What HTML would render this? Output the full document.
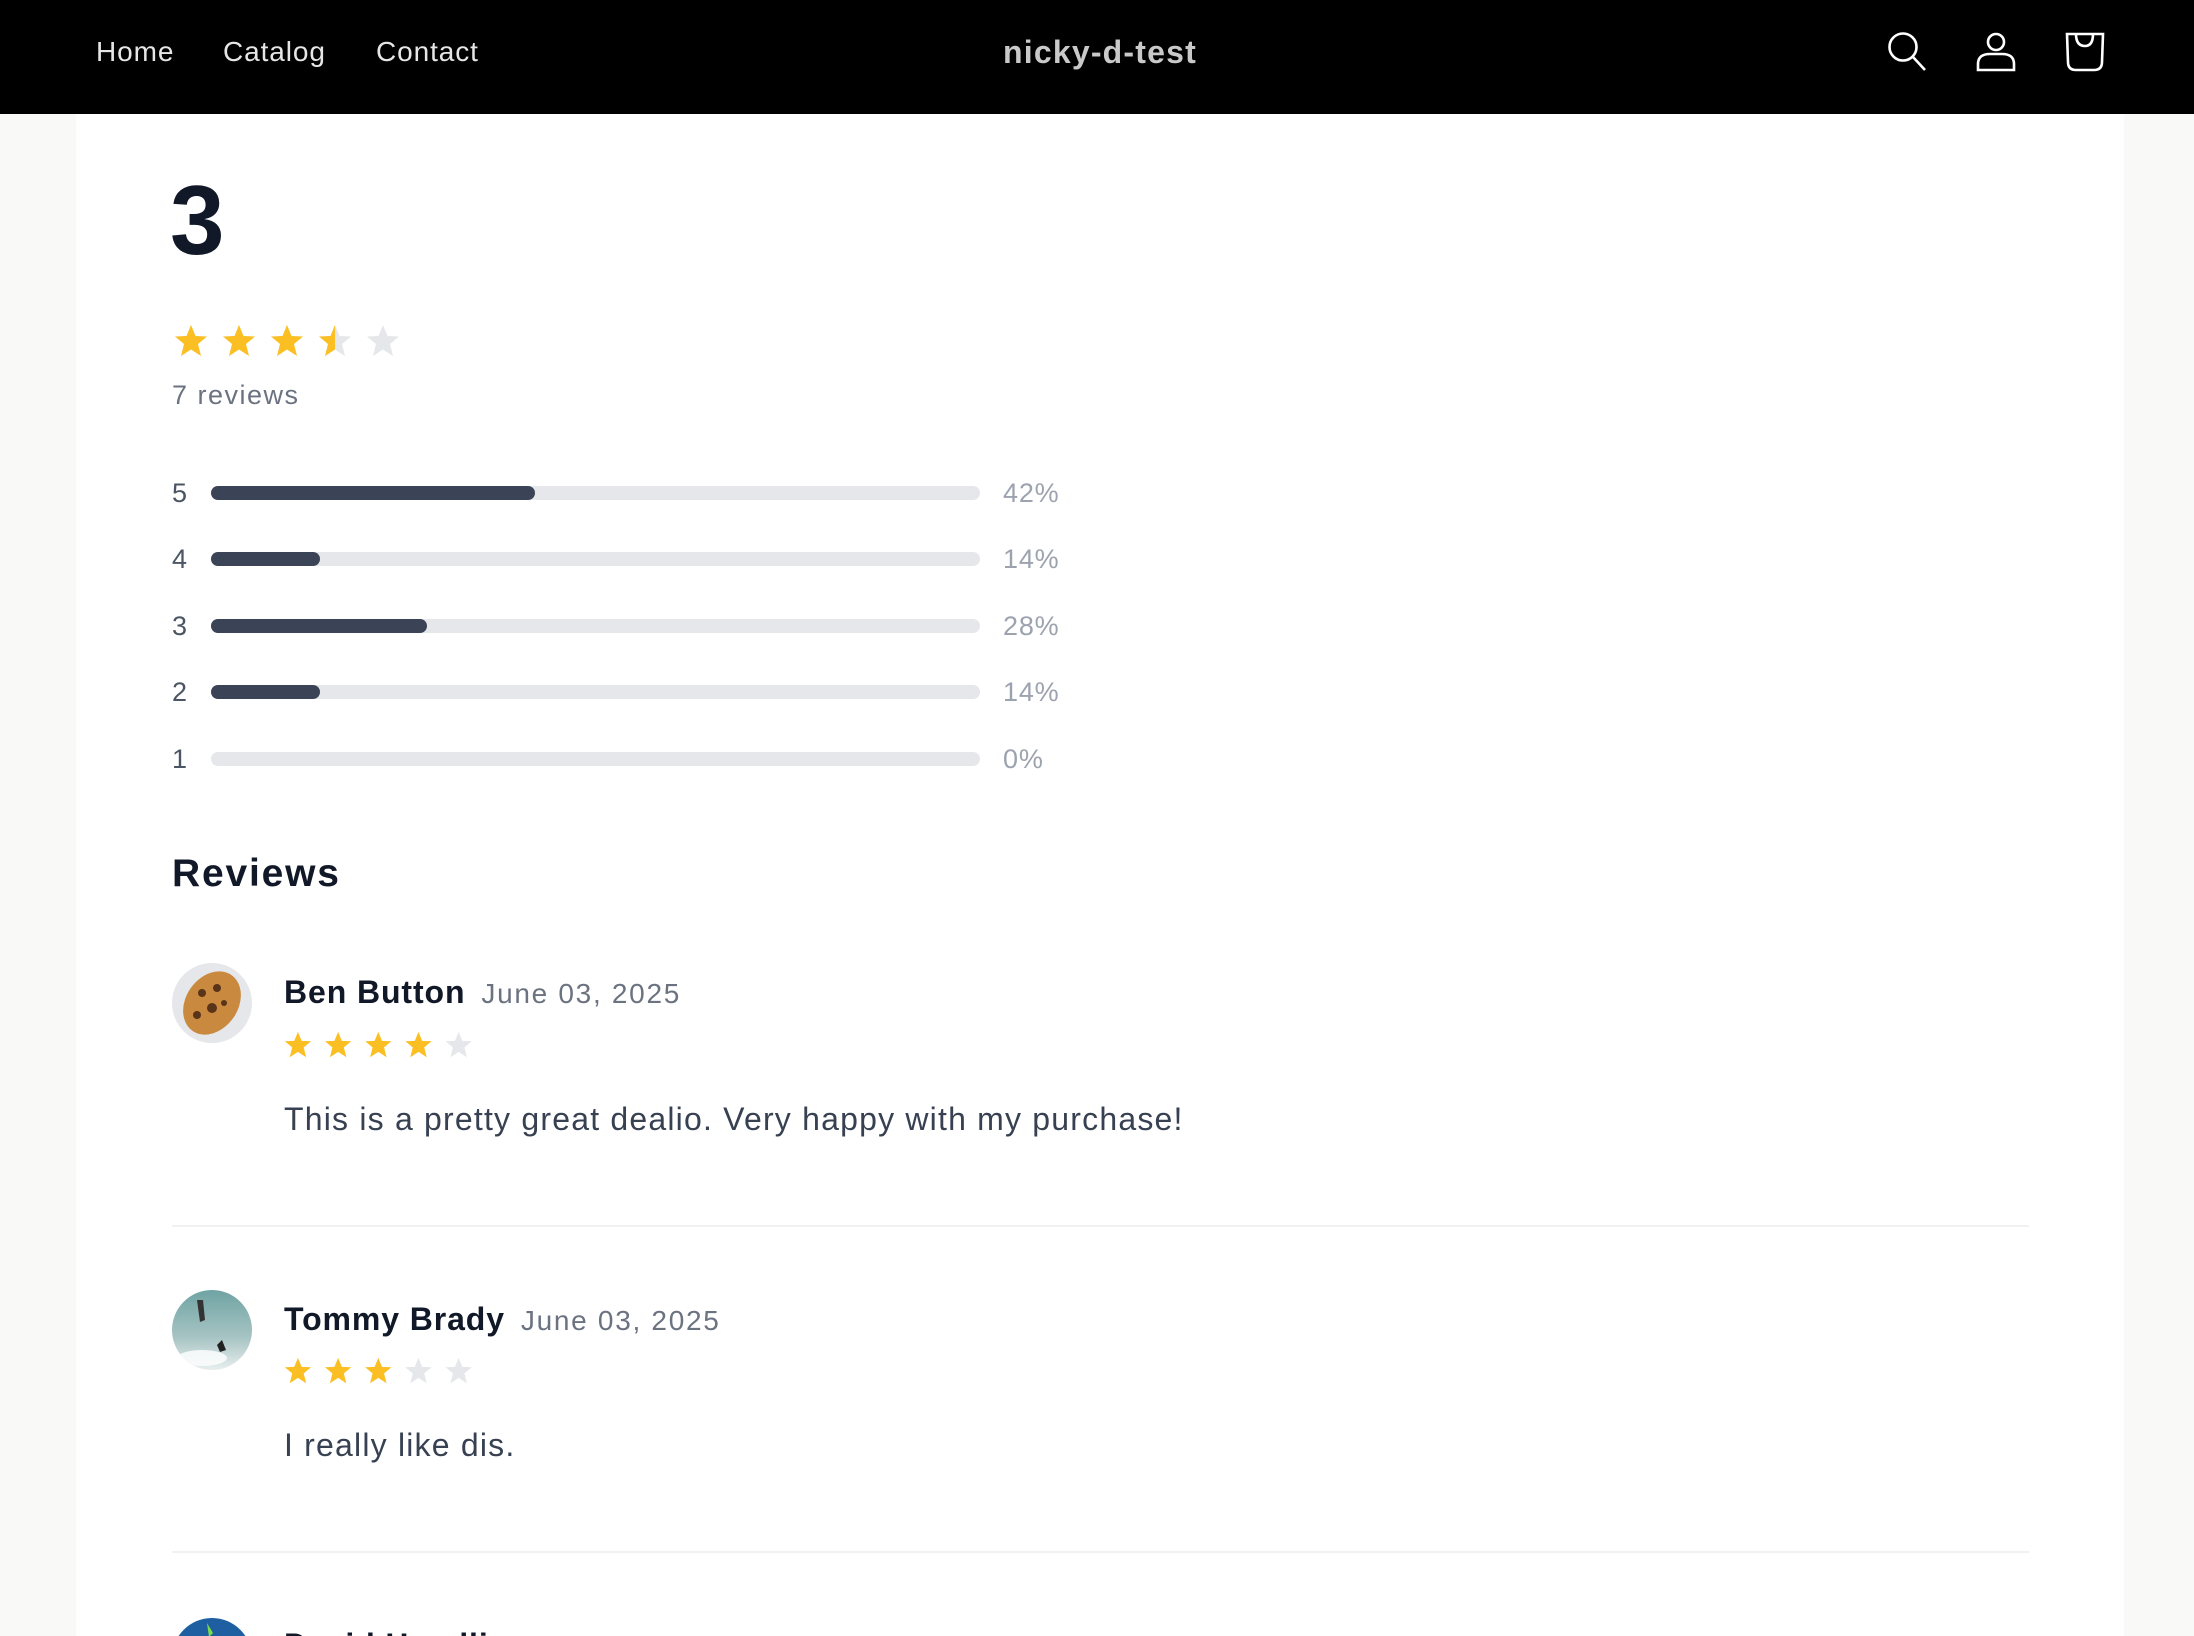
<!DOCTYPE html>
<html style="overflow:hidden;height:1636px"><head><meta charset="utf-8"><style>
*{margin:0;padding:0;box-sizing:border-box}
body{width:2194px;height:1636px;overflow:hidden;background:#f9f9f8;font-family:"Liberation Sans",Arial,sans-serif;position:relative}
.wrap{position:absolute;left:0;top:0;width:2194px;height:1636px;overflow:hidden}
.hdr{position:absolute;left:0;top:0;width:2194px;height:114px;background:#000}
.nav{position:absolute;top:36px;font-size:28px;color:#e6e6e6;letter-spacing:.9px}
.logo{position:absolute;top:34px;left:0;width:2200px;text-align:center;font-size:32px;font-weight:bold;color:#c9c9c9;letter-spacing:1.2px}
.panel{position:absolute;left:76px;top:114px;width:2048px;height:1522px;background:#fff}
.a{position:absolute}
.big{left:170px;top:171px;font-size:98px;font-weight:bold;color:#111827;line-height:1}
.gray{color:#6b7280}
.lbl{position:absolute;left:172px;font-size:27px;color:#4b5563}
.track{position:absolute;left:211px;width:769px;height:14px;border-radius:7px;background:#e5e7eb}
.fill{height:14px;border-radius:7px;background:#3b4457}
.pct{position:absolute;left:1003px;font-size:27px;color:#9ca3af;letter-spacing:.8px}
.name{font-size:32px;font-weight:bold;color:#111827;letter-spacing:.9px}
.date{font-size:28px;color:#6b7280;margin-left:16px;font-weight:normal;letter-spacing:1.7px}
.txt{font-size:32px;color:#374151;letter-spacing:1.2px}
.hr{position:absolute;left:172px;width:1857px;height:2px;background:#f0f1f3}
.av{position:absolute;left:172px;width:80px;height:80px;border-radius:50%;overflow:hidden}
</style></head><body><div class="wrap">
<div class="hdr">
<div class="nav" style="left:96px">Home</div>
<div class="nav" style="left:223px">Catalog</div>
<div class="nav" style="left:376px">Contact</div>
<div class="logo">nicky-d-test</div>
<svg class="a" style="left:1870px;top:20px" width="260" height="70" viewBox="1870 20 260 70" fill="none" stroke="#fff" stroke-width="2.6">
<circle cx="1903" cy="47" r="13.5"/><line x1="1913" y1="57" x2="1925" y2="70"/>
<circle cx="1996" cy="42" r="8"/><path d="M1978 70 V64 Q1978 54 1990 54 H2002 Q2014 54 2014 64 V70 Z"/>
<path d="M2067 34 H2103 L2102 62 Q2102 70 2094 70 H2076 Q2068 70 2068 62 Z"/><path d="M2076 34 Q2076 46 2085 46 Q2093 46 2093 34"/>
</svg>
</div>
<div class="panel"></div>
<div class="a big">3</div>
<svg class="a" style="left:174px;top:324px" width="240" height="36" viewBox="0 0 240 36">
<defs><path id="s" d="M17 1 L21.5 12 L33 12.5 L24 20 L27 32 L17 25.5 L7 32 L10 20 L1 12.5 L12.5 12 Z"/>
<clipPath id="h"><rect x="0" y="0" width="17" height="36"/></clipPath></defs>
<use href="#s" fill="#fbbf24"/><use href="#s" x="48" fill="#fbbf24"/><use href="#s" x="96" fill="#fbbf24"/>
<use href="#s" x="144" fill="#e5e7eb"/><g transform="translate(144 0)"><use href="#s" fill="#fbbf24" clip-path="url(#h)"/></g>
<use href="#s" x="192" fill="#e5e7eb"/></svg>
<div class="a gray" style="left:172px;top:380px;font-size:27px;letter-spacing:1.5px">7 reviews</div>

<div class="lbl" style="top:478px">5</div><div class="track" style="top:486px"><div class="fill" style="width:324px"></div></div><div class="pct" style="top:478px">42%</div>
<div class="lbl" style="top:544px">4</div><div class="track" style="top:552px"><div class="fill" style="width:109px"></div></div><div class="pct" style="top:544px">14%</div>
<div class="lbl" style="top:611px">3</div><div class="track" style="top:619px"><div class="fill" style="width:216px"></div></div><div class="pct" style="top:611px">28%</div>
<div class="lbl" style="top:677px">2</div><div class="track" style="top:685px"><div class="fill" style="width:109px"></div></div><div class="pct" style="top:677px">14%</div>
<div class="lbl" style="top:744px">1</div><div class="track" style="top:752px"></div><div class="pct" style="top:744px">0%</div>

<div class="a" style="left:172px;top:852px;font-size:39px;font-weight:bold;color:#111827;letter-spacing:1.8px">Reviews</div>

<div class="av" style="top:963px;background:#e5e7eb"><svg width="80" height="80"><ellipse cx="40" cy="40" rx="26" ry="34" transform="rotate(35 40 40)" fill="#c9893f"/><circle cx="30" cy="30" r="4" fill="#5a3418"/><circle cx="45" cy="25" r="4" fill="#5a3418"/><circle cx="40" cy="45" r="5" fill="#5a3418"/><circle cx="25" cy="52" r="4" fill="#5a3418"/><circle cx="52" cy="40" r="3" fill="#5a3418"/></svg></div>
<div class="a" style="left:284px;top:974px"><span class="name">Ben Button</span><span class="date">June 03, 2025</span></div>
<svg class="a" style="left:284px;top:1031px" width="200" height="30" viewBox="0 0 200 30"><g transform="scale(.82)"><use href="#s" fill="#fbbf24"/><use href="#s" x="49" fill="#fbbf24"/><use href="#s" x="98" fill="#fbbf24"/><use href="#s" x="147" fill="#fbbf24"/><use href="#s" x="196" fill="#e5e7eb"/></g></svg>
<div class="a txt" style="left:284px;top:1101px">This is a pretty great dealio. Very happy with my purchase!</div>
<div class="hr" style="top:1225px"></div>

<div class="av" style="top:1290px;background:linear-gradient(180deg,#6fa3a3,#a8c4c4 60%,#e8eeee)"><svg width="80" height="80"><path d="M25 10 l6 0 l2 20 l-5 2 z" fill="#333"/><path d="M45 55 l5 -5 l4 10 l-6 2z" fill="#222"/><ellipse cx="30" cy="68" rx="25" ry="8" fill="#fff" opacity=".8"/></svg></div>
<div class="a" style="left:284px;top:1301px"><span class="name">Tommy Brady</span><span class="date">June 03, 2025</span></div>
<svg class="a" style="left:284px;top:1357px" width="200" height="30" viewBox="0 0 200 30"><g transform="scale(.82)"><use href="#s" fill="#fbbf24"/><use href="#s" x="49" fill="#fbbf24"/><use href="#s" x="98" fill="#fbbf24"/><use href="#s" x="147" fill="#e5e7eb"/><use href="#s" x="196" fill="#e5e7eb"/></g></svg>
<div class="a txt" style="left:284px;top:1427px">I really like dis.</div>
<div class="hr" style="top:1551px"></div>

<div class="av" style="top:1618px;background:#1d5fa0"><svg width="80" height="80"><path d="M35 5 l6 10 l-4 4z" fill="#7cdc4c"/></svg></div>
<div class="a" style="left:284px;top:1627px"><span class="name">David Hendlin</span><span class="date">June 03, 2025</span></div>
</div></body></html>
